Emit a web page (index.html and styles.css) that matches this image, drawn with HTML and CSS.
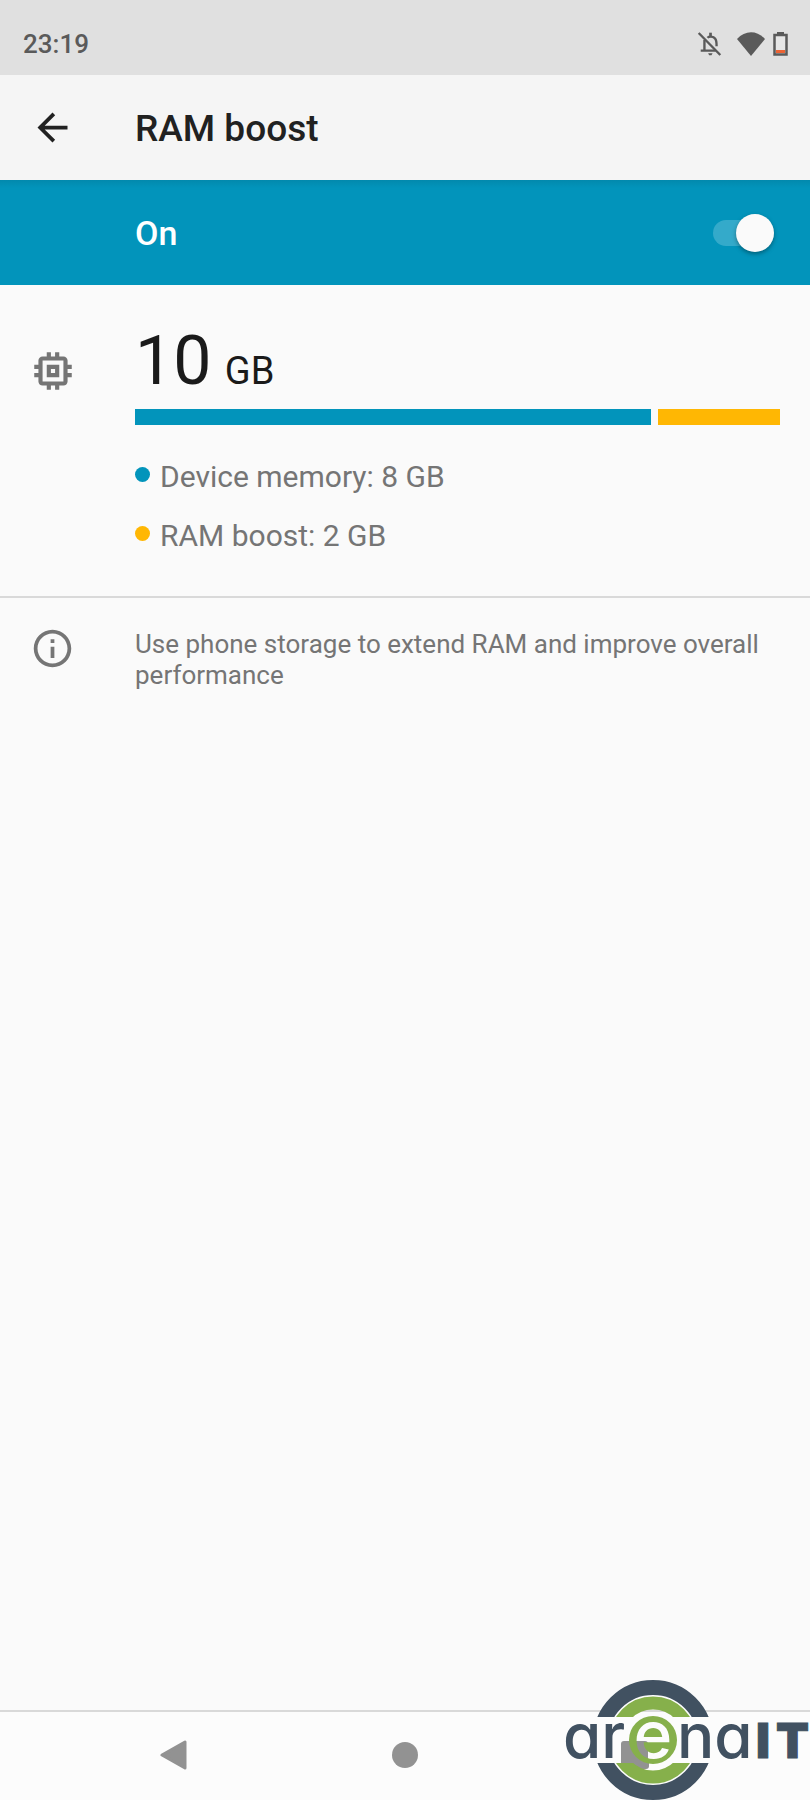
FILE: index.html
```html
<!DOCTYPE html>
<html lang="en">
<head>
  <meta charset="UTF-8" />
  <meta name="viewport" content="width=device-width, initial-scale=1.0"/>
  <title>RAM boost</title>
  <link rel="stylesheet" href="styles.css">
</head>
<body>
  <div class="status-bar">
    <time class="clock">23:19</time>
    <div class="status-icons">
      <svg class="icon-bell" viewBox="0 0 74 74" fill="none" stroke="currentColor" stroke-width="7">
        <path d="M5 6l64 65"/>
        <path d="M22 27v31M11 58h44"/>
        <path d="M31 20c4-4 17-6 23 3 4 5 4 9 4 22"/>
        <path d="M40 15V5" stroke-width="8"/>
        <path d="M33 66h13l-3 6h-7z" fill="currentColor" stroke="none"/>
      </svg>
      <svg class="icon-wifi" viewBox="0 0 28 24" fill="currentColor">
        <path d="M14 24L0 7C8-2 20-2 28 7z"/>
      </svg>
      <svg class="icon-battery" viewBox="0 0 15 24">
        <path d="M4 0h7v3H4z" fill="currentColor"/>
        <path d="M1.500 3h12v19.500h-12z" fill="#e6e6e6" stroke="currentColor" stroke-width="2.500"/>
        <path d="M3 18h9v3H3z" fill="#ec6334"/>
      </svg>
    </div>
  </div>

  <header class="app-bar">
    <button class="back" type="button" aria-label="Navigate up">
      <svg viewBox="0 0 24 24" fill="currentColor">
        <path d="M20 11H7.83l5.59-5.59L12 4l-8 8 8 8 1.41-1.41L7.83 13H20v-2z"/>
      </svg>
    </button>
    <h1>RAM boost</h1>
  </header>

  <div class="switch-bar">
    <label for="boost">On</label>
    <input class="switch" type="checkbox" role="switch" id="boost" checked />
  </div>

  <main>
    <section class="memory">
      <svg class="icon-chip" viewBox="0 0 24 24" fill="currentColor">
        <path d="M15 9H9v6h6V9zm-2 4h-2v-2h2v2zm8-2V9h-2V7c0-1.1-.9-2-2-2h-2V3h-2v2h-2V3H9v2H7c-1.1 0-2 .9-2 2v2H3v2h2v2H3v2h2v2c0 1.1.9 2 2 2h2v2h2v-2h2v2h2v-2h2c1.1 0 2-.9 2-2v-2h2v-2h-2v-2h2zm-4 6H7V7h10v10z"/>
      </svg>
      <div class="memory-info">
        <p class="total"><span class="amount">10</span> GB</p>
        <div class="bar">
          <div class="bar-device"></div>
          <div class="bar-boost"></div>
        </div>
        <ul class="legend">
          <li class="device">Device memory: 8 GB</li>
          <li class="boost">RAM boost: 2 GB</li>
        </ul>
      </div>
    </section>

    <section class="note">
      <svg class="icon-info" viewBox="0 0 24 24" fill="currentColor">
        <path d="M11 7h2v2h-2zm0 4h2v6h-2zm1-9C6.48 2 2 6.48 2 12s4.48 10 10 10 10-4.48 10-10S17.52 2 12 2zm0 18c-4.41 0-8-3.59-8-8s3.59-8 8-8 8 3.59 8 8-3.59 8-8 8z"/>
      </svg>
      <p>Use phone storage to extend RAM and improve overall performance</p>
    </section>
  </main>

  <nav class="nav-bar">
    <button type="button" aria-label="Back">
      <svg viewBox="0 0 30 30" fill="currentColor" stroke="currentColor" stroke-width="3" stroke-linejoin="round">
        <path d="M2 15L25 2v26z"/>
      </svg>
    </button>
    <button type="button" aria-label="Home">
      <svg viewBox="0 0 30 30" fill="currentColor"><circle cx="15" cy="15" r="13"/></svg>
    </button>
    <button type="button" aria-label="Recent apps">
      <svg viewBox="0 0 30 30" fill="currentColor"><rect x="1" y="1" width="28" height="28" rx="3"/></svg>
    </button>
  </nav>

  <svg class="logo" viewBox="-6 0 250 122" role="img" aria-label="arenaIT">
    <defs>
      <clipPath id="caps">
        <path d="M0 0h244v39H0zM0 85h244v37H0z"/>
      </clipPath>
      <pattern id="see-through" width="244" height="122" patternUnits="userSpaceOnUse">
        <rect width="244" height="122" fill="#fcfcfc"/>
        <rect x="54" y="63" width="28" height="28" rx="3" fill="#929292"/>
      </pattern>
    </defs>
    <g clip-path="url(#caps)" fill="none">
      <circle cx="87" cy="62" r="52" stroke="#415161" stroke-width="16"/>
      <circle cx="87" cy="62" r="44" stroke="#fcfcfc" stroke-width="2"/>
      <circle cx="87" cy="62" r="37" stroke="#86b04b" stroke-width="13"/>
    </g>
    <circle cx="87" cy="62" r="24" fill="#86b04b"/>
    <text class="letters" x="-3" y="80">ar</text>
    <text class="letters letter-e" x="87" y="80">e</text>
    <text class="letters" x="111" y="80">na</text>
    <text class="letters-it" y="80"><tspan x="190">I</tspan><tspan x="210">T</tspan></text>
  </svg>
</body>
</html>
```
FILE: styles.css
```css
* {
  box-sizing: border-box;
}

body {
  font-family: Roboto, sans-serif;
  margin: 0;
  min-height: 100vh;
  display: flex;
  flex-direction: column;
  background: #fafafa;
  color: #1a1a1a;
}

h1, p, ul {
  margin: 0;
  padding: 0;
}

svg {
  display: block;
}

button {
  padding: 0;
  border: none;
  background: none;
  color: inherit;
  cursor: pointer;
}

.status-bar {
  display: flex;
  justify-content: space-between;
  align-items: center;
  height: 75px;
  padding: 12px 22px 0 23px;
  background: #e0e0e0;
  color: #5a5a5a;
}

.clock {
  font-size: 26px;
  font-weight: 500;
}

.status-icons {
  display: flex;
  align-items: center;
}

.icon-bell {
  width: 25px;
  height: 25px;
  margin-right: 15px;
}

.icon-wifi {
  width: 28px;
  height: 24px;
  margin-right: 8px;
}

.icon-battery {
  width: 15px;
  height: 24px;
}

.app-bar {
  display: flex;
  align-items: center;
  gap: 60px;
  height: 105px;
  padding: 0 30px;
  background: #f5f5f5;
  color: #212121;
}

.back svg,
.icon-info {
  width: 45px;
  height: 45px;
}

h1 {
  padding-top: 2px;
  font-size: 37px;
  font-weight: 500;
}

.switch-bar {
  display: flex;
  justify-content: space-between;
  align-items: center;
  height: 105px;
  padding: 0 36px 0 135px;
  background: linear-gradient(#0289ad, #0294bb 8px);
  color: white;
}

.switch-bar label {
  font-size: 34px;
  font-weight: 500;
}

.switch {
  appearance: none;
  display: flex;
  align-items: center;
  justify-content: flex-end;
  width: 61px;
  height: 26px;
  margin: 0;
  border-radius: 13px;
  background: #34aaca;
  cursor: pointer;
}

.switch::before {
  content: "";
  flex: none;
  width: 38px;
  height: 38px;
  border-radius: 50%;
  background: #fafafa;
  box-shadow: 0 2px 4px rgba(0,0,0,0.35);
}

.switch:not(:checked) {
  justify-content: flex-start;
}

main {
  flex: 1;
}

.memory,
.note {
  display: grid;
  grid-template-columns: 105px 1fr;
  column-gap: 30px;
  justify-items: center;
  padding-right: 30px;
  color: #757575;
}

.memory {
  padding-top: 36px;
  padding-bottom: 21px;
  border-bottom: 2px solid #d9d9d9;
}

.icon-chip {
  width: 50px;
  height: 50px;
  margin-top: 25px;
}

.memory-info,
.note p {
  width: 100%;
}

.total {
  height: 88px;
  font-size: 38px;
  line-height: 80px;
  color: #1a1a1a;
}

.amount {
  margin-right: 4px;
  font-size: 68px;
}

.bar {
  display: flex;
  gap: 7px;
  height: 16px;
  margin-bottom: 22px;
}

.bar-device {
  flex: 4.23;
  background: #0294bb;
}

.bar-boost {
  flex: 1;
  background: #ffb703;
}

.legend {
  padding-bottom: 10px;
  list-style: none;
  font-size: 30px;
  line-height: 59px;
}

.legend li {
  display: flex;
  align-items: center;
  gap: 10px;
}

.legend li::before {
  content: "";
  width: 15px;
  height: 15px;
  margin-bottom: 4px;
  border-radius: 50%;
}

.device::before {
  background: #0294bb;
}

.boost::before {
  background: #ffb703;
}

.note {
  padding-top: 28px;
}

.note p {
  padding-top: 3px;
  font-size: 26px;
  line-height: 31px;
}

.nav-bar {
  display: flex;
  justify-content: center;
  gap: 200px;
  padding: 28px 0 30px;
  border-top: 2px solid #d9d9d9;
  background: #fcfcfc;
  color: #929292;
}

.nav-bar svg {
  width: 30px;
  height: 30px;
}

.logo {
  position: absolute;
  right: 0;
  bottom: 0;
  width: 250px;
  height: 122px;
  pointer-events: none;
}

.letters {
  font-family: Inter, sans-serif;
  font-size: 62px;
  font-weight: 500;
  font-feature-settings: "cv11";
  fill: #415161;
}

.letter-e {
  font-size: 66px;
  text-anchor: middle;
  fill: url(#see-through);
}

.letters-it {
  font-family: Inter, sans-serif;
  font-size: 48px;
  font-weight: 900;
  fill: #415161;
  stroke: #415161;
  stroke-width: 1px;
}
```
